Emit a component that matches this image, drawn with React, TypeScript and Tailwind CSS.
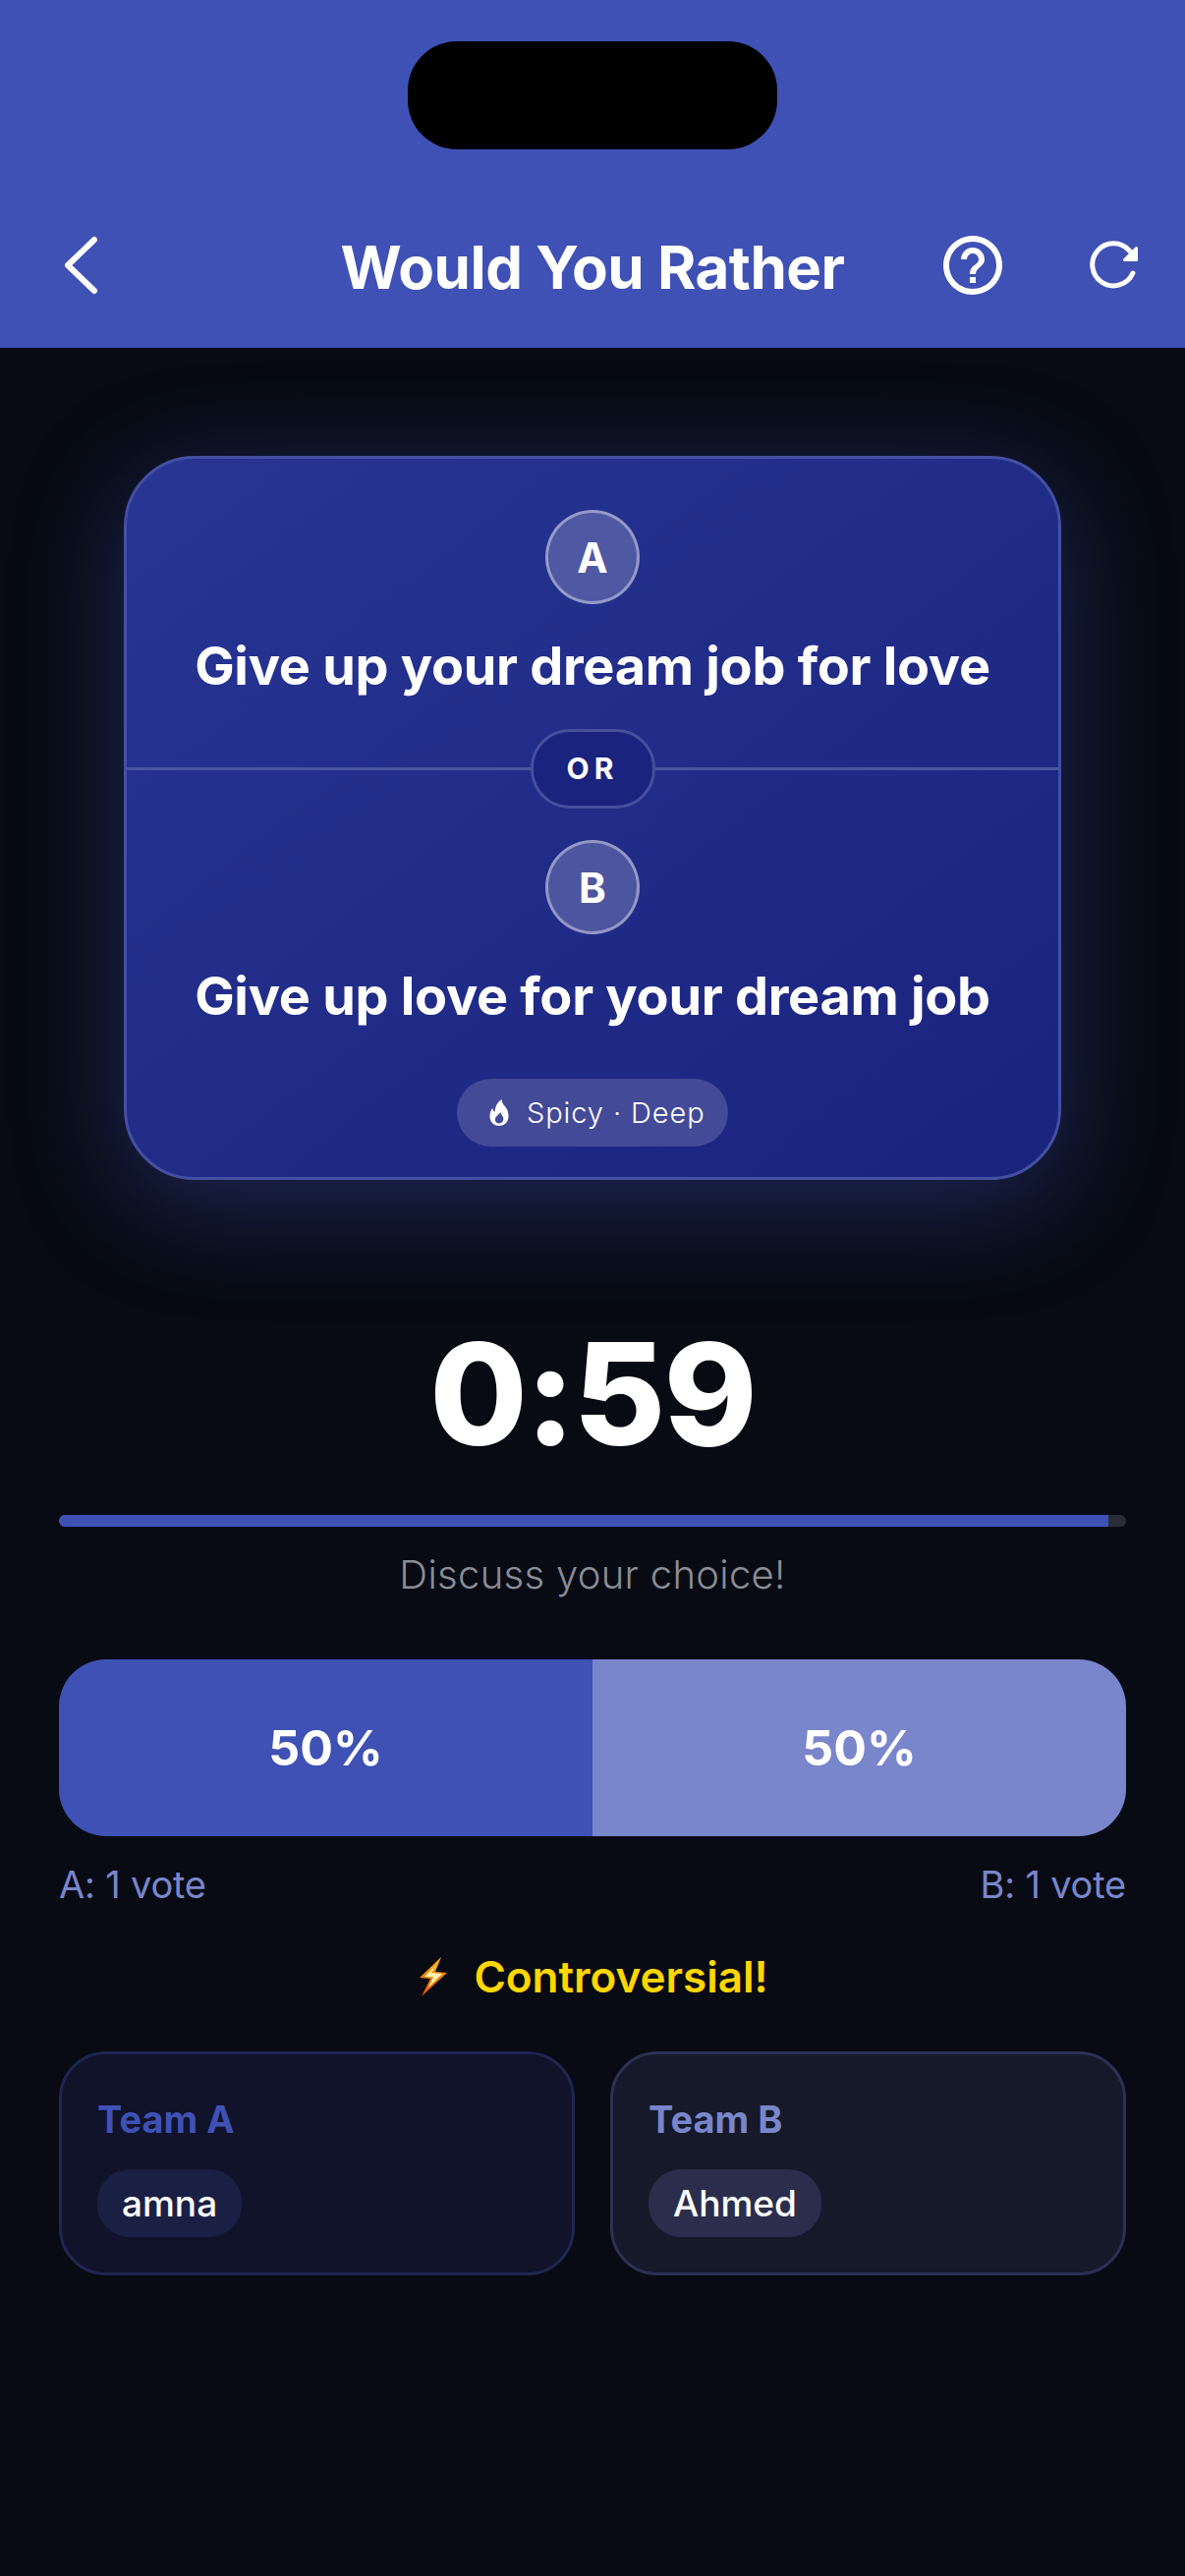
import React from "react";

const BackIcon = () => (
  <svg width="40" height="64" viewBox="0 0 40 64" fill="none" stroke="white" strokeWidth="6" strokeLinecap="round" strokeLinejoin="round">
    <polyline points="34,6 7,32 34,58" />
  </svg>
);

const HelpIcon = () => (
  <svg width="72" height="72" viewBox="0 0 24 24" fill="white">
    <path d="M11 18h2v-2h-2v2zm1-16C6.48 2 2 6.48 2 12s4.48 10 10 10 10-4.48 10-10S17.52 2 12 2zm0 18c-4.41 0-8-3.59-8-8s3.59-8 8-8 8 3.59 8 8-3.59 8-8 8zm0-14c-2.21 0-4 1.79-4 4h2c0-1.1.9-2 2-2s2 .9 2 2c0 2-3 1.75-3 5h2c0-2.25 3-2.5 3-5 0-2.21-1.79-4-4-4z" />
  </svg>
);

const RefreshIcon = () => (
  <svg width="56" height="56" viewBox="0 0 56 56" fill="none">
    <path d="M46.9 36.1A21.5 21.5 0 1 1 43.6 13.4" stroke="white" strokeWidth="5" strokeLinecap="round" />
    <polygon points="50.5,10.5 50.5,22.5 38.5,22.5" fill="white" stroke="white" strokeWidth="3" strokeLinejoin="round" />
  </svg>
);

const FlameIcon = () => (
  <svg width="22" height="29" viewBox="0 0 24 32">
    <path
      fillRule="evenodd"
      fill="white"
      d="M15 1c0 4 1.500 5.500 4 8.500 2.500 3 3.500 6.500 3.500 11 0 6-4.800 10.500-10.500 10.500S1.500 26.500 1.500 20.500c0-4 1-7 3-9.500.4 2 1.200 3 2.800 4C7.500 9.500 10 4 15 1zM13.500 15.500c-.5 2.500-6 4-6 8.500 0 2.500 2 4 4.500 4s4.800-1.800 4.800-4.800c0-3-2.800-4.700-3.300-7.700z"
    />
  </svg>
);

const BoltIcon = () => (
  <svg width="30" height="42" viewBox="0 0 30 42">
    <defs>
      <linearGradient id="boltGrad" x1="0" y1="0" x2="0" y2="1">
        <stop offset="0" stopColor="#ffb300" />
        <stop offset="1" stopColor="#e65100" />
      </linearGradient>
    </defs>
    <polygon points="23,1 1,22 12,23 3,41 29,17 17,16" fill="url(#boltGrad)" />
    <polygon points="20,7 6,21 15,21.500 10,32 24,18 13,17" fill="#fff3b0" />
  </svg>
);

const Choice = ({ letter, text }: { letter: string; text: string }) => (
  <div className="flex flex-col items-center">
    <div className="flex h-[96px] w-[96px] items-center justify-center rounded-full border-[3px] border-[#ffffff66] bg-[#ffffff33] text-[42px] font-bold text-white">
      {letter}
    </div>
    <p className="mt-[29px] text-center text-[54px] leading-[68px] font-bold tracking-[-0.3px] whitespace-nowrap text-white">{text}</p>
  </div>
);

const TeamCard = ({ name, player, box, title, chip }: { name: string; player: string; box: string; title: string; chip: string }) => (
  <div className={`h-[228px] flex-1 rounded-[48px] border-[3px] px-[36px] pt-[38px] ${box}`}>
    <p className={`text-[38px] leading-[56px] font-bold ${title}`}>{name}</p>
    <span className={`mt-[23px] inline-block rounded-[33px] px-[25px] text-[37px] leading-[69px] font-medium text-white ${chip}`}>{player}</span>
  </div>
);

export default function App() {
  return (
    <div className="h-[2622px] w-[1206px] overflow-hidden bg-[#080b14] [font-family:Inter,sans-serif]">
      <header className="relative grid h-[354px] grid-cols-[1fr_auto_1fr] items-center bg-[#3f51b5] pt-[190px]">
        <div className="absolute top-[42px] left-[415px] h-[110px] w-[376px] rounded-[50px] bg-black" />
        <div className="pb-[4px] pl-[62px]">
          <BackIcon />
        </div>
        <h1 className="text-[60px] leading-[80px] font-bold tracking-[-0.5px] text-white">Would You Rather</h1>
        <div className="flex items-center justify-end gap-[80px] pr-[44px] pb-[4px]">
          <HelpIcon />
          <RefreshIcon />
        </div>
      </header>

      <main className="px-[60px]">
        <section className="mx-[66px] mt-[110px] h-[737px] rounded-[72px] border-[3px] border-[#444fa3] bg-gradient-to-br from-[#283593] to-[#1a237e] pt-[52px] shadow-[0_24px_110px_rgba(63,81,181,0.42)]">
          <Choice letter="A" text="Give up your dream job for love" />
          <div className="mt-[30px] flex items-center">
            <div className="h-[3px] flex-1 bg-[#4a559f]" />
            <div className="flex h-[81px] w-[127px] items-center justify-center rounded-[40px] border-[3px] border-[#454f9d] bg-[#1a237e] text-[30px] font-bold tracking-[5px] text-white">
              OR
            </div>
            <div className="h-[3px] flex-1 bg-[#4a559f]" />
          </div>
          <div className="mt-[32px]">
            <Choice letter="B" text="Give up love for your dream job" />
          </div>
          <div className="mt-[50px] flex justify-center">
            <div className="flex h-[69px] w-[276px] items-center gap-[17px] rounded-[35px] bg-[#434a97] pl-[32px] text-[29px] font-light tracking-[0.9px] text-white">
              <FlameIcon />
              <span>Spicy · Deep</span>
            </div>
          </div>
        </section>

        <div className="mt-[146px] text-center text-[144px] leading-[144px] font-extrabold tracking-[-2px] text-white">0:59</div>

        <div className="mt-[51px] h-[12px] overflow-hidden rounded-[6px] bg-[#2a2d38]">
          <div className="h-full w-[98.3%] bg-[#3f51b5]" />
        </div>
        <p className="mt-[24px] text-center text-[40px] leading-[50px] font-light tracking-[0.3px] text-[#8b8d94]">Discuss your choice!</p>

        <div className="mt-[61px] flex h-[180px] overflow-hidden rounded-[48px] text-[50px] font-bold text-white">
          <div className="flex flex-1 items-center justify-center bg-[#3f51b5]">50%</div>
          <div className="flex flex-1 items-center justify-center bg-[#7986cb]">50%</div>
        </div>

        <div className="mt-[24px] flex justify-between text-[38px] leading-[50px] tracking-[-0.2px] text-[#7986cb]">
          <span>A: 1 vote</span>
          <span>B: 1 vote</span>
        </div>

        <div className="mt-[41px] flex items-center justify-center gap-[26px] pl-[2px] text-[44px] leading-[56px] font-semibold text-[#ffd600]">
          <BoltIcon />
          <span>Controversial!</span>
        </div>

        <div className="mt-[48px] flex gap-[36px]">
          <TeamCard name="Team A" player="amna" box="border-[#1f2650] bg-[#10132a]" title="text-[#3f51b5]" chip="bg-[#1a2044]" />
          <TeamCard name="Team B" player="Ahmed" box="border-[#2c3054] bg-[#151929]" title="text-[#7986cb]" chip="bg-[#2a2e4c]" />
        </div>
      </main>
    </div>
  );
}
